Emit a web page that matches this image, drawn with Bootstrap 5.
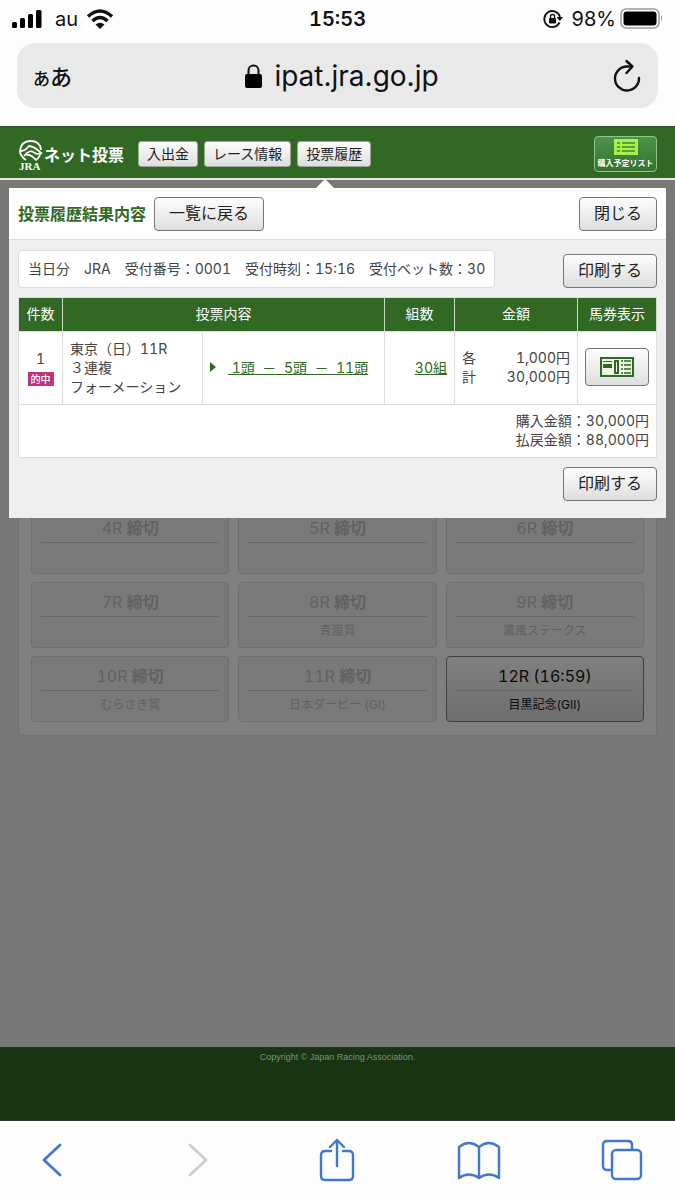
<!DOCTYPE html>
<html lang="ja">
<head>
<meta charset="utf-8">
<meta name="viewport" content="width=device-width, initial-scale=1">
<title>JRA ネット投票</title>
<link href="https://cdn.jsdelivr.net/npm/bootstrap@5.3.0/dist/css/bootstrap.min.css" rel="stylesheet">
<style>
:root{--jra-green:#306824}
body{font-family:Inter,"Noto Sans CJK JP",sans-serif;font-size:14px;line-height:20px;color:#444;background:#fdfdfd}
svg{display:block;flex:none}
.status-bar{height:38px;padding:0 12px;font-size:20px;color:#111}
.status-bar .clock{font-size:20px;font-weight:600;font-variant-numeric:tabular-nums}
.status-side{flex:1 1 0}
.address-bar{height:65px;margin:5px 17px 18px;padding:0 16px;border-radius:18px;background:#e9e9e9;color:#111}
.address-bar .host{font-size:28px;line-height:32px}
.host-group{gap:12px}
.aa-btn{font-size:22px;line-height:28px;font-weight:500}
.aa-btn small{font-size:17px}
.plain-btn{border:0;padding:0;background:none;color:inherit}
.site-header{height:54px;padding:2px 18px 0;background:var(--jra-green);border-top:1px solid #24501b;border-bottom:2px solid #e4ebe2}
.brand-link{padding-top:2px;margin-right:12px}
.brand-text{font-size:16px;font-weight:600;color:#fff;line-height:24px;width:82px;white-space:nowrap}
.menu-btns{gap:6px}
.grey-btn{border:1px solid #777;border-radius:4px;background:linear-gradient(#fdfdfd,#dedede);color:#222;padding:0;white-space:nowrap}
.nav-pill{height:26px;padding:0 8px;border-color:#9aa896;border-radius:3px;font-size:14px;line-height:20px}
.list-btn{width:63px;height:36px;gap:2px;border:1px solid #8fc48a;border-radius:4px;background:linear-gradient(#4a9448,#35722f);color:#fff;font-size:8px;font-weight:700;line-height:12px;padding:0}
.stage{background:#787878;padding:8px 9px 0}
.result-panel{background:#efefef;z-index:2;font-variant-numeric:tabular-nums}
.result-panel::before{content:"";position:absolute;left:307px;top:-9px;border:9px solid transparent;border-top:0;border-bottom-color:#fff}
.panel-head{height:52px;padding:0 9px;background:#fff;border-bottom:1px solid #ddd}
.panel-title{font-size:16px;line-height:20px;font-weight:600;color:var(--jra-green)}
.action-btn{height:34px;padding:0 14px 2px;font-size:16px;line-height:20px}
.panel-body{padding:10px 9px 17px}
.receipt{height:38px;padding:0 9px;gap:14px;background:#fff;border:1px solid #ddd;border-radius:4px;white-space:nowrap}
.bet-table{table-layout:fixed;width:100%;margin:9px 0;background:#fff;border:1px solid #ddd;border-collapse:collapse}
.col-no{width:44px}.col-race{width:140px}.col-sets{width:70px}.col-amount{width:123px}.col-ticket{width:79px}
.bet-table th{height:34px;background:var(--jra-green);color:#fff;font-weight:400;text-align:center;padding:0 0 2px;border-right:1px solid #c9d8c5}
.bet-table td{border:1px solid #ddd;height:73px;padding:0 7px 2px;vertical-align:middle;line-height:19px}
.bet-table .totals{height:53px;text-align:right}
.bet-table a{color:var(--jra-green)}
.pick{gap:12px}
.hit{background:#c23379;color:#fff;font-size:10px;line-height:14px;font-weight:500;padding:0 3px;width:26px;white-space:nowrap}
.race-panel{margin:-21px 9px 0;padding:10px 12px 13px;background:#808080;border:1px solid #717171;border-radius:4px}
.race-grid{display:grid;grid-template-columns:repeat(3,1fr);gap:8px 9px}
.race{height:66px;padding:6px 9px 0;background:#7a7a7a;border:1px solid #6e6e6e;border-radius:4px;color:#616161;text-align:center;font-size:16px;line-height:27px;font-variant-numeric:tabular-nums}
.race b{font-weight:600}
.race .race-name{border-top:1px solid #666;font-size:12px;line-height:18px;padding-top:5px;display:block}
.race.open{background:linear-gradient(#808080,#6e6e6e);border-color:#3f4144;color:#0a0a0a}
.site-footer{height:74px;background:#183412;border-bottom:1px solid #33302c;color:#808f7b;font:9px/20px "Liberation Sans",sans-serif}
.tool-bar{height:79px;padding:0 32px;color:#4177cc}
</style>
</head>
<body class="d-flex flex-column min-vh-100">
<header>
  <div class="status-bar d-flex align-items-center">
    <div class="status-side d-flex align-items-center gap-2">
      <svg width="31" height="20" viewBox="0 0 31 20" aria-hidden="true"><rect y="13" width="5" height="6" rx="1.5"/><rect x="8" y="9" width="5" height="10" rx="1.5"/><rect x="16" y="5" width="5" height="14" rx="1.5"/><rect x="24" y="1" width="5.500" height="18" rx="1.500"/></svg>
      <span class="ms-1">au</span>
      <svg width="28" height="20" viewBox="0 0 28 20" fill="none" stroke="#111" stroke-width="3.400" aria-hidden="true"><path d="M2 7.500Q14-3.500 26 7.500M6.500 12Q14 5 21.500 12"/><path d="M14 20l-4.500-4.500Q14 12 18.500 15.500z" fill="#111" stroke="none"/></svg>
    </div>
    <span class="clock">15:53</span>
    <div class="status-side d-flex align-items-center justify-content-end gap-1">
      <svg width="21" height="20" viewBox="0 0 21 20" fill="none" stroke="#111" stroke-width="1.800" aria-hidden="true"><path d="M16.500 13.500A8 8 0 1 1 17 8"/><path d="M13.500 8h6.500l-3.200 4z" fill="#111" stroke="none"/><rect x="6" y="9" width="7" height="5.500" rx="1" fill="#111" stroke="none"/><path d="M7.500 9V7.500a2 2 0 0 1 4 0V9" stroke-width="1.400"/></svg>
      <span class="ms-1">98%</span>
      <svg width="43" height="22" viewBox="0 0 43 22" aria-hidden="true"><rect x="1" y="1" width="38" height="19" rx="5" fill="none" stroke="#999" stroke-width="1.500"/><rect x="3.500" y="3.500" width="33" height="14" rx="3"/><path d="M41 7q2 3.500 0 7z" fill="#999"/></svg>
    </div>
  </div>
  <div class="address-bar d-flex align-items-center justify-content-between">
    <button class="plain-btn aa-btn pt-1" type="button"><small>あ</small>あ</button>
    <div class="host-group d-flex align-items-center">
      <svg width="17" height="24" viewBox="0 0 17 24" aria-hidden="true"><rect y="10" width="17" height="14" rx="2"/><path d="M3.500 11V6.500a5 5 0 0 1 10 0V11" fill="none" stroke="#111" stroke-width="2"/></svg>
      <span class="host">ipat.jra.go.jp</span>
    </div>
    <button class="plain-btn" type="button" aria-label="再読み込み"><svg width="30" height="34" viewBox="0 0 30 34" fill="none" stroke="#111" stroke-width="2.400" stroke-linecap="round" stroke-linejoin="round"><path d="M27 19A12 12 0 1 1 15 7.500h5"/><path d="M14.500 2l6 5.500-6 6.500"/></svg></button>
  </div>
  <nav class="site-header d-flex align-items-center">
    <a href="#" class="brand-link d-flex align-items-center text-decoration-none">
      <svg width="26" height="32" viewBox="0 0 26 32" fill="none" stroke="#fff" stroke-width="1.800" aria-hidden="true"><path d="M8 21Q2 17 2 12 3 2 12.500 2 22 2 23 11"/><path d="M3 12q4 0 8-5 5 0 12 7l-4 1-6-3"/><path d="M6 17q3-4 7-5M8 16q5-1 10 5 3-2 5-7" stroke-width="1.600"/><text x="1" y="31" font-family="Liberation Serif" font-size="11" font-weight="700" fill="#fff" stroke="none">JRA</text></svg>
      <span class="brand-text">ネット投票</span>
    </a>
    <div class="menu-btns d-flex">
      <button class="grey-btn nav-pill" type="button">入出金</button>
      <button class="grey-btn nav-pill" type="button">レース情報</button>
      <button class="grey-btn nav-pill" type="button">投票履歴</button>
    </div>
    <button class="list-btn d-flex flex-column align-items-center justify-content-center ms-auto" type="button">
      <svg width="24" height="16" viewBox="0 0 24 16" aria-hidden="true"><path fill="#a8ee4c" d="M0 0h24v16H0z"/><path stroke="#3f8a2c" stroke-width="1.500" d="M3 4h3M8 4h13M3 8h3M8 8h13M3 12h3M8 12h13"/></svg>
      <span class="text-nowrap">購入予定リスト</span>
    </button>
  </nav>
</header>
<main class="stage flex-grow-1">
  <section class="result-panel position-relative">
    <div class="panel-head d-flex align-items-center">
      <h1 class="panel-title mb-0 me-2">投票履歴結果内容</h1>
      <button class="grey-btn action-btn" type="button">一覧に戻る</button>
      <button class="grey-btn action-btn ms-auto" type="button">閉じる</button>
    </div>
    <div class="panel-body">
      <div class="d-flex justify-content-between align-items-end">
        <div class="receipt d-flex align-items-center"><span>当日分</span><span>JRA</span><span>受付番号：0001</span><span>受付時刻：15:16</span><span>受付ベット数：30</span></div>
        <button class="grey-btn action-btn" type="button">印刷する</button>
      </div>
      <table class="bet-table">
        <colgroup><col class="col-no"><col class="col-race"><col><col class="col-sets"><col class="col-amount"><col class="col-ticket"></colgroup>
        <thead><tr><th>件数</th><th colspan="2">投票内容</th><th>組数</th><th>金額</th><th>馬券表示</th></tr></thead>
        <tbody>
          <tr>
            <td class="text-center"><div>1</div><div class="hit mx-auto mt-1">的中</div></td>
            <td>東京（日）11R<br>３連複<br>フォーメーション</td>
            <td><div class="pick d-flex align-items-center"><svg width="6" height="10" viewBox="0 0 6 10" aria-hidden="true"><path d="M0 0l6 5-6 5z" fill="#306824"/></svg><a href="#" class="text-nowrap">&nbsp;1頭&nbsp;&nbsp;－&nbsp;&nbsp;5頭&nbsp;&nbsp;－&nbsp;&nbsp;11頭</a></div></td>
            <td class="text-end"><a href="#">30組</a></td>
            <td><div class="d-flex justify-content-between"><span>各</span><span>1,000円</span></div><div class="d-flex justify-content-between"><span>計</span><span>30,000円</span></div></td>
            <td><button class="grey-btn w-100 py-2 d-flex justify-content-center" type="button" aria-label="馬券表示"><svg width="34" height="20" viewBox="0 0 34 20"><path fill="#eef7e6" stroke="#306824" stroke-width="2" d="M1 1h32v18H1z"/><path fill="#306824" d="M3 4h9v1H3zM3 7h9v4H3z"/><path fill="none" stroke="#306824" stroke-width="2" d="M15 4h3v12h-3z"/><path stroke="#306824" stroke-width="1.500" d="M21 4h2M24 4h7M21 8h2M24 8h7M21 12h2M24 12h7M21 16h2M24 16h7"/></svg></button></td>
          </tr>
        </tbody>
        <tfoot><tr><td colspan="6" class="totals">購入金額：30,000円<br>払戻金額：88,000円</td></tr></tfoot>
      </table>
      <div class="text-end"><button class="grey-btn action-btn" type="button">印刷する</button></div>
    </div>
  </section>
  <section class="race-panel">
    <div class="race-grid">
      <div class="race">4R <b>締切</b><span class="race-name"></span></div>
      <div class="race">5R <b>締切</b><span class="race-name"></span></div>
      <div class="race">6R <b>締切</b><span class="race-name"></span></div>
      <div class="race">7R <b>締切</b><span class="race-name"></span></div>
      <div class="race">8R <b>締切</b><span class="race-name">青嵐賞</span></div>
      <div class="race">9R <b>締切</b><span class="race-name">薫風ステークス</span></div>
      <div class="race">10R <b>締切</b><span class="race-name">むらさき賞</span></div>
      <div class="race">11R <b>締切</b><span class="race-name">日本ダービー (GI)</span></div>
      <button class="race open d-flex flex-column align-items-stretch justify-content-start" type="button"><span>12R (16:59)</span><span class="race-name">目黒記念(GII)</span></button>
    </div>
  </section>
</main>
<footer class="site-footer text-center">Copyright © Japan Racing Association.</footer>
<nav class="tool-bar d-flex align-items-center justify-content-between" aria-label="ブラウザ">
  <button class="plain-btn" type="button" aria-label="戻る"><svg width="40" height="44" viewBox="0 0 40 44" fill="none" stroke="currentColor" stroke-width="2.800" stroke-linecap="round" stroke-linejoin="round"><path d="M28 6L12 21l16 15"/></svg></button>
  <button class="plain-btn" type="button" aria-label="進む" disabled><svg width="40" height="44" viewBox="0 0 40 44" fill="none" stroke="#ccc" stroke-width="2.800" stroke-linecap="round" stroke-linejoin="round"><path d="M18 6l16 15-16 15"/></svg></button>
  <button class="plain-btn" type="button" aria-label="共有"><svg width="44" height="44" viewBox="-4 0 44 44" fill="none" stroke="currentColor" stroke-width="2.400" stroke-linecap="round" stroke-linejoin="round"><path d="M14 12H8q-4 0-4 4v21q0 4 4 4h24q4 0 4-4V16q0-4-4-4h-6M20 27V1M13 8l7-7 7 7"/></svg></button>
  <button class="plain-btn" type="button" aria-label="ブックマーク"><svg width="44" height="44" viewBox="0 0 44 44" fill="none" stroke="currentColor" stroke-width="2.400" stroke-linejoin="round"><path d="M22 39Q12 32 2 39V8q10-8 20 0 10-8 20 0v31Q32 32 22 39zM22 8v31"/></svg></button>
  <button class="plain-btn" type="button" aria-label="タブ"><svg width="42" height="44" viewBox="0 0 42 44" fill="none" stroke="currentColor" stroke-width="2.400"><path d="M11 31H6q-4 0-4-4V6q0-4 4-4h21q4 0 4 4v5"/><rect x="11" y="11" width="29" height="29" rx="4"/></svg></button>
</nav>
<script src="https://cdn.jsdelivr.net/npm/bootstrap@5.3.0/dist/js/bootstrap.bundle.min.js"></script>
</body>
</html>
